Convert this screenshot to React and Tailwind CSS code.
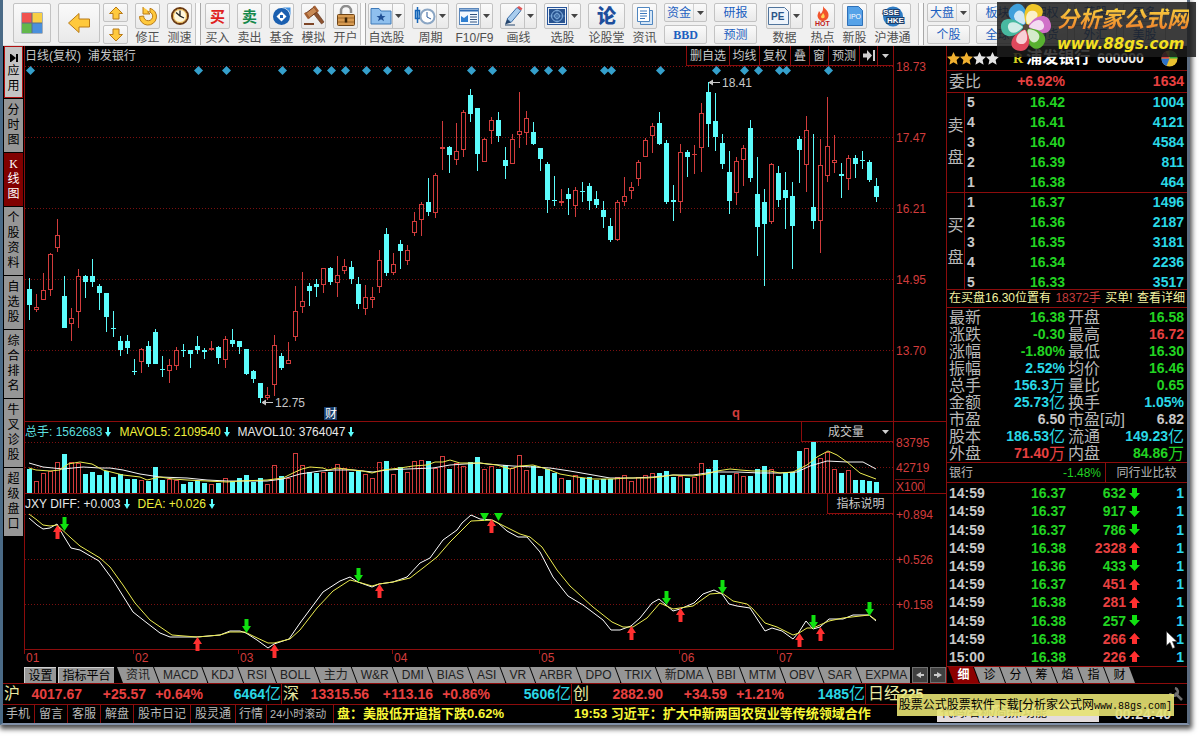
import React from 'react';

// kind (d = down, u = up, x = flat up), high, low, body top, body bottom
const CANDLES = `
d 278 320 289 305|u 294 312 307 310|u 273 300 290 300|u 253 296 254 290|u 219 252 235 248|d 276 328 296 328
u 308 341 318 324|u 269 328 276 312|d 275 298 276 282|d 259 287 276 282|d 284 310 286 293|d 293 332 293 317
d 311 337 328 329|d 336 356 341 350|d 335 354 341 348|d 359 375 371 372|u 348 373 349 362|d 341 367 346 364
d 329 364 332 364|d 356 377 369 370|u 359 383 365 371|u 347 370 350 366|d 344 357 350 351|d 350 368 350 354
d 336 354 346 350|d 348 359 350 352|x 341 351 348 350|d 346 364 347 358|u 336 368 339 360|d 329 347 340 344
d 341 354 341 347|d 349 375 349 374|d 370 383 371 379|d 383 403 383 398|u 387 400 395 398|u 335 396 345 385
d 353 370 356 368|u 342 364 360 364|u 286 341 311 337|u 272 313 301 307|d 283 306 286 291|d 279 297 284 287
u 268 293 268 285|d 267 285 268 282|u 256 297 275 283|u 259 274 266 271|d 261 284 267 279|d 277 309 284 304
u 285 315 297 309|u 287 308 297 300|u 250 293 260 287|d 228 276 234 273|u 253 275 264 273|d 240 269 244 251
u 245 265 250 261|u 212 236 221 233|u 202 236 204 220|d 178 216 202 212|u 173 218 175 213|x 121 170 147 149
d 146 173 147 155|u 123 165 151 160|u 110 157 112 150|d 89 122 95 114|d 108 171 108 154|u 138 162 139 162
u 117 144 120 131|d 112 142 120 136|d 147 179 160 166|u 134 164 139 164|u 92 148 131 135|u 111 145 118 133
d 122 145 132 144|d 148 171 148 159|d 162 213 164 200|d 176 206 200 201|x 189 206 201 203|d 188 215 194 199
u 187 217 190 206|d 182 202 191 192|d 183 210 186 201|d 191 208 199 205|d 201 228 210 217|d 218 242 226 240
u 200 241 202 240|u 177 206 196 202|u 182 199 187 191|u 160 186 162 179|u 138 157 140 157|u 123 153 126 136
d 112 145 123 144|d 140 204 143 202|d 185 221 200 202|u 144 213 152 202|d 150 177 152 157|x 145 174 154 155
u 103 172 113 148|d 82 147 92 124|d 93 151 121 137|d 134 169 143 164|d 151 214 172 201|u 157 205 161 193
u 145 186 148 160|d 120 182 128 178|d 157 256 194 227|d 189 286 202 224|u 163 224 164 222|d 166 207 173 200
d 172 229 190 198|d 182 269 196 226|d 136 183 139 150|u 116 192 130 165|d 134 229 207 221|u 139 253 165 221
u 97 182 146 176|u 135 173 160 163|d 163 198 174 176|u 155 190 158 179|d 155 178 158 164|d 151 169 160 161
d 160 182 162 180|d 178 202 186 197`
  .trim()
  .split(/[|\n]/)
  .map((row) => {
    const [kind, ...n] = row.split(' ');
    return [kind, ...n.map(Number)];
  });

const VOLUMES = [
  24, 12, 20, 22, 31, 39, 31, 30, 19, 21, 18, 22, 16, 19, 14, 14, 13, 12, 26, 13, 14, 13, 9, 11, 12,
  10, 9, 10, 15, 12, 15, 18, 11, 15, 9, 28, 17, 15, 40, 28, 21, 20, 21, 21, 29, 25, 21, 22, 19, 15,
  31, 32, 19, 26, 21, 32, 33, 32, 25, 37, 24, 30, 27, 31, 36, 24, 27, 24, 28, 25, 38, 23, 27, 17, 24,
  20, 15, 13, 18, 15, 16, 13, 14, 14, 16, 18, 12, 16, 18, 20, 20, 22, 16, 17, 15, 16, 30, 24, 33, 18,
  18, 20, 17, 17, 24, 27, 24, 17, 20, 21, 42, 45, 51, 35, 41, 24, 20, 23, 13, 13, 12, 11,
];

const DIAMONDS = [0, 24, 28, 36, 41, 43, 45, 48, 51, 54, 63, 66, 72, 74, 76, 82, 83, 90, 98, 102, 104, 107, 108, 114];

const MAVOL5 =
  '29,468 36,470 50,471 60,470 68,464 80,462 92,464 103,470 123,475 140,477 147,480 160,477 173,479 187,480 207,481 227,482 240,481 267,480 283,478 293,473 302,469 310,467 323,468 328,470 337,468 353,470 363,471 372,473 383,470 400,468 413,466 427,465 435,462 443,462 450,460 460,463 480,463 497,465 510,469 520,466 533,465 550,470 560,474 577,477 593,479 613,479 627,478 647,478 660,477 673,475 693,476 707,474 717,471 730,469 740,470 753,471 770,471 780,473 793,472 807,465 817,457 828,451 837,455 847,462 860,473 876,479';
const MAVOL10 =
  '29,463 43,467 63,469 83,467 100,468 110,468 123,470 140,474 160,477 187,478 207,480 227,481 247,481 267,481 283,479 300,474 320,471 333,470 353,470 373,472 387,470 407,469 433,468 450,465 480,463 487,464 513,466 533,467 550,468 570,471 593,475 610,478 633,478 653,477 673,475 693,475 713,472 737,472 760,473 780,473 797,472 810,466 827,461 847,462 863,462 876,469';
const DIFF =
  '29,518 37,525 43,529 50,528 57,524 63,535 71,548 80,550 99,561 113,580 133,612 147,623 160,633 170,637 197,637 220,635 230,631 240,631 246,633 257,640 268,648 274,644 289,639 300,623 323,592 340,581 350,577 358,582 372,587 379,584 393,582 407,577 420,563 430,558 443,540 457,530 462,523 471,515 480,519 492,520 498,523 507,531 518,537 527,537 540,552 553,577 568,596 583,605 603,620 611,630 620,630 631,626 640,618 652,603 659,599 666,605 673,611 680,609 694,603 703,594 714,590 722,594 729,604 737,606 750,608 765,631 772,628 782,631 793,639 799,632 806,621 813,629 820,627 829,619 843,619 853,615 869,615 876,621';
const DEA =
  '29,514 37,520 43,525 50,526 57,525 71,538 80,546 100,558 110,567 123,585 135,603 150,620 172,635 197,637 220,635 230,632 245,632 253,636 268,643 274,643 290,639 300,630 317,608 333,591 350,580 358,582 372,586 379,584 393,582 410,578 423,568 437,557 450,542 471,521 492,520 498,523 510,529 520,534 530,537 542,547 557,570 570,586 593,607 612,622 623,627 633,627 647,618 660,603 673,609 693,606 710,594 722,593 733,601 747,604 753,609 765,623 777,627 793,635 799,633 807,628 813,628 829,621 843,618 869,615 876,620';

const BUY_MARKS = [[57, 525], [197, 637], [274, 644], [379, 584], [491, 519], [631, 626], [680, 608], [799, 633], [820, 627]];
const SELL_MARKS = [[64, 531], [246, 633], [358, 582], [666, 605], [722, 594], [813, 629], [869, 616]];

const ASKS = [['5', '16.42', '1004'], ['4', '16.41', '4121'], ['3', '16.40', '4584'], ['2', '16.39', '811'], ['1', '16.38', '464']];
const BIDS = [['1', '16.37', '1496'], ['2', '16.36', '2187'], ['3', '16.35', '3181'], ['4', '16.34', '2236'], ['5', '16.33', '3517']];

const G = 'text-[#22d322]';
const R = 'text-[#e84040]';
const C = 'text-[#2ad8e6]';
const W = 'text-[#c8c8c8]';

const STATS = [
  ['最新', '16.38', '', G, '开盘', '16.58', '', G],
  ['涨跌', '-0.30', '', G, '最高', '16.72', '', R],
  ['涨幅', '-1.80%', '', G, '最低', '16.30', '', G],
  ['振幅', '2.52%', '', C, '均价', '16.46', '', G],
  ['总手', '156.3', '万', C, '量比', '0.65', '', G],
  ['金额', '25.73', '亿', C, '换手', '1.05%', '', C],
  ['市盈', '6.50', '', W, '市盈[动]', '6.82', '', W],
  ['股本', '186.53', '亿', C, '流通', '149.23', '亿', C],
  ['外盘', '71.40', '万', R, '内盘', '84.86', '万', G],
];

const TICKS = [
  ['14:59', '16.37', '632', 'down'],
  ['14:59', '16.37', '917', 'down'],
  ['14:59', '16.37', '786', 'down'],
  ['14:59', '16.38', '2328', 'up'],
  ['14:59', '16.36', '433', 'down'],
  ['14:59', '16.37', '451', 'up'],
  ['14:59', '16.38', '281', 'up'],
  ['14:59', '16.38', '257', 'down'],
  ['14:59', '16.38', '266', 'up'],
  ['15:00', '16.38', '226', 'up'],
];

const INDICATORS = ['资讯', 'MACD', 'KDJ', 'RSI', 'BOLL', '主力', 'W&R', 'DMI', 'BIAS', 'ASI', 'VR', 'ARBR', 'DPO', 'TRIX', '新DMA', 'BBI', 'MTM', 'OBV', 'SAR', 'EXPMA'];

const INDEXES = [
  { name: '沪', price: '4017.67', diff: '+25.57', pct: '+0.64%', amount: '6464', cell: 'w-[279px]', first: 'w-[78px]' },
  { name: '深', price: '13315.56', diff: '+113.16', pct: '+0.86%', amount: '5606', cell: 'w-[290px]', first: 'w-[86px]' },
  { name: '创', price: '2882.90', diff: '+34.59', pct: '+1.21%', amount: '1485', cell: 'w-[294px]', first: 'w-[90px]' },
];

const SIDE_TABS = [
  ['分时图', 'h-[54px]'],
  ['K线图', 'h-[54px]'],
  ['个股资料', 'h-[69px]'],
  ['自选股', 'h-[54px]'],
  ['综合排名', 'h-[69px]'],
  ['牛叉诊股', 'h-[69px]'],
  ['超级盘口', 'h-[69px]'],
];

/* ---------- toolbar ---------- */

const face = 'border border-[#c3c3c3] bg-linear-to-b from-[#fafafa] to-[#e9e9e9] rounded-[2px]';

function Caret({ className = 'fill-[#444]' }) {
  return (
    <svg className={`w-[7px] h-[4px] ${className}`} viewBox="0 0 7 4">
      <path d="M0 0h7L3.5 4z" />
    </svg>
  );
}

function Tool({ label, children, drop, wide }) {
  return (
    <button className={`flex flex-col items-center gap-px shrink-0 ${drop || wide ? 'w-[37px]' : 'w-[25px]'}`}>
      <span className={`flex h-[26px] w-full ${face}`}>
        <span className="flex-1 flex items-center justify-center">{children}</span>
        {drop && (
          <span className="w-[12px] flex items-center justify-center border-l border-[#c3c3c3]">
            <Caret />
          </span>
        )}
      </span>
      <span className="text-[12px] leading-[16px] text-[#505050] whitespace-nowrap">{label}</span>
    </button>
  );
}

function PairButton({ top, bottom, drop, bold }) {
  const cls = `h-[19px] flex items-center justify-center text-[12px] leading-[16px] text-[#1c5fc0] ${face}`;
  return (
    <div className="w-[43px] shrink-0 flex flex-col gap-[3px]">
      <button className={cls}>
        <span className="flex-1">{top}</span>
        {drop && (
          <span className="w-[13px] h-full border-l border-[#d0d0d0] flex items-center justify-center">
            <Caret />
          </span>
        )}
      </button>
      <button className={bold ? `${cls} font-bold font-['Liberation_Serif',serif]` : cls}>{bottom}</button>
    </div>
  );
}

function Divider() {
  return (
    <div className="w-[6px] shrink-0 h-[42px] border-l border-r border-l-[#c4c4c4] border-r-[#a8a8a8] bg-[#fafafa]" />
  );
}

const GOLD = { fill: '#ffc93c', stroke: '#b97b18', strokeWidth: 1 };

function Toolbar() {
  return (
    <header className="h-[46px] bg-[#f0f0f0] border-b border-[#d8d8d8] flex items-start pt-[3px] pl-[5px] overflow-hidden">
      <div className="flex gap-[7px] pl-[5px]">
        <button aria-label="首页" className={`w-[38px] h-[40px] flex items-center justify-center ${face}`}>
          <svg width="22" height="22" viewBox="0 0 22 22">
            <rect x=".5" y=".5" width="21" height="21" fill="#5a6f86" />
            <rect x="1" y="1" width="9.500" height="9.500" fill="#f0534f" />
            <rect x="11.500" y="1" width="9.500" height="9.500" fill="#f8cf45" />
            <rect x="1" y="11.500" width="9.500" height="9.500" fill="#63b84c" />
            <rect x="11.500" y="11.500" width="9.500" height="9.500" fill="#4a90dc" />
          </svg>
        </button>
        <button aria-label="后退" className={`w-[42px] h-[40px] flex items-center justify-center ${face}`}>
          <svg width="24" height="22" viewBox="0 0 24 22">
            <path d="M1.500 11L12 1.500V7h10.500v8H12v5.500z" {...GOLD} />
          </svg>
        </button>
        <div className="w-[25px] -ml-[4px] flex flex-col gap-[3px]">
          <button aria-label="上一个" className={`h-[19px] flex items-center justify-center ${face}`}>
            <svg width="16" height="14" viewBox="0 0 16 14">
              <path d="M8 1L14.500 7.500H11V13H5V7.500H1.500z" {...GOLD} />
            </svg>
          </button>
          <button aria-label="下一个" className={`h-[19px] flex items-center justify-center ${face}`}>
            <svg width="16" height="14" viewBox="0 0 16 14">
              <path d="M8 13L14.500 6.500H11V1H5v5.500H1.500z" {...GOLD} />
            </svg>
          </button>
        </div>
        <Tool label="修正">
          <svg width="20" height="20" viewBox="0 0 20 20">
            <path d="M5 1v7h7L9.500 5.800A4.500 4.500 0 1 1 5.700 10L1.500 10.500A8.500 8.500 0 1 0 12 2.300V6" {...GOLD} />
          </svg>
        </Tool>
        <Tool label="测速">
          <svg width="20" height="20" viewBox="0 0 20 20">
            <circle cx="10" cy="10" r="8" fill="#fff8dd" stroke="#6b3b14" strokeWidth="2" />
            <circle cx="10" cy="10" r="6.500" fill="none" stroke="#e8b040" />
            <path d="M10 4.500V10l4 2M10 10L6 6.500" stroke="#222" strokeWidth="1.300" fill="none" />
          </svg>
        </Tool>
        <div className="-ml-[4px] -mr-[3px]">
          <Divider />
        </div>
        <Tool label="买入">
          <span className="text-[15px] font-bold leading-none text-[#e02020]">买</span>
        </Tool>
        <Tool label="卖出">
          <span className="text-[15px] font-bold leading-none text-[#15884a]">卖</span>
        </Tool>
        <Tool label="基金">
          <svg width="20" height="20" viewBox="0 0 20 20">
            <circle cx="9.500" cy="10.500" r="8.500" fill="#1a5fb0" />
            <path d="M10 1.500h8.500v9A8.500 8.500 0 0 0 10 1.500z" fill="#3f8fe0" />
            <path d="M9.500 5.500l5 5-5 5-5-5z" fill="#fff" />
            <rect x="8" y="9" width="3" height="3" fill="#1a5fb0" />
          </svg>
        </Tool>
        <Tool label="模拟">
          <svg width="22" height="22" viewBox="0 0 22 22">
            <path d="M10 8l3-2 8 11-2.500 2z" fill="#8c5230" stroke="#5b2d14" strokeWidth=".6" />
            <path d="M2.500 8.500L11 2l3.500 4.500L6 13z" fill="#c98a55" stroke="#6b3517" />
            <path d="M1 8.500l2-1.500 4 6-2 1.200zM10 1.500L12 .5l4 5.500-2 1.500z" fill="#a35f33" />
            <path d="M1 18h10v2H1z" fill="#7d4526" />
          </svg>
        </Tool>
        <Tool label="开户">
          <svg width="20" height="22" viewBox="0 0 20 22">
            <path d="M5 10V6a5 5 0 0 1 10 0v2" fill="none" stroke="#8d8d8d" strokeWidth="2.500" />
            <rect x="1.500" y="9.500" width="17" height="11" rx="1" fill="#d79b52" stroke="#704516" />
            <path d="M2 13h16M2 17h16" stroke="#9b6526" />
            <path d="M10 12.500v5" stroke="#3b2408" strokeWidth="2.500" />
          </svg>
        </Tool>
        <div className="-ml-[5px]">
          <Divider />
        </div>
      </div>

      <div className="flex gap-[7px] pl-[2px]">
        <Tool label="自选股" drop>
          <svg width="22" height="18" viewBox="0 0 22 18">
            <path d="M1 3V1.500h8L11 4h10v13H1z" fill="#8fc0ee" stroke="#3f7ab8" />
            <path d="M11 6l1.300 3h3.200l-2.500 2 1 3.200-3-1.900-3 1.900 1-3.200-2.500-2h3.200z" fill="#1f4f94" />
          </svg>
        </Tool>
        <Tool label="周期" drop>
          <svg width="22" height="20" viewBox="0 0 22 20">
            <path d="M3.500 1v16M1.500 4.500h4v8h-4z" stroke="#1565b8" strokeWidth="1.500" fill="#bfe0fa" />
            <circle cx="13.500" cy="10.500" r="7" fill="#fff" stroke="#8ba6c4" strokeWidth="2" />
            <path d="M13 6v5l4 2" stroke="#2c5c9c" fill="none" />
          </svg>
        </Tool>
        <Tool label="F10/F9" drop>
          <svg width="20" height="17" viewBox="0 0 20 17">
            <rect x=".5" y=".5" width="19" height="16" fill="#f2f8fe" stroke="#5b87bb" />
            <path d="M1 2.500h18" stroke="#2f6cb5" strokeWidth="2" />
            <path d="M2 8l3 2 4-3v7H2z" fill="#2f7fd0" />
            <path d="M11 6.500h7M11 9h7M11 11.500h7M11 14h7" stroke="#30507c" />
          </svg>
        </Tool>
        <Tool label="画线" drop>
          <svg width="20" height="20" viewBox="0 0 20 20">
            <path d="M4 13L14 1.500l4 3L8 16.500z" fill="#a9cdee" stroke="#3d6fa8" />
            <path d="M14 1.500L16 0l3.500 2.500L18 4.500z" fill="#e05656" />
            <path d="M4 13l4 3.500L2 18.500z" fill="#25466f" />
            <path d="M2 19h10" stroke="#25466f" />
          </svg>
        </Tool>
        <Tool label="选股" drop>
          <svg width="20" height="18" viewBox="0 0 20 18">
            <rect x=".5" y=".5" width="19" height="17" fill="#e6eef7" stroke="#28559a" />
            <rect x="2" y="2" width="16" height="14" fill="#27528f" />
            <circle cx="10" cy="9" r="5.500" fill="none" stroke="#8fbbe8" />
            <circle cx="10" cy="9" r="2.500" fill="none" stroke="#8fbbe8" />
            <path d="M2 9h16M10 2v14" stroke="#6695cc" strokeWidth=".7" />
          </svg>
        </Tool>
        <Tool label="论股堂" wide>
          <span className="text-[19px] font-black leading-none text-[#1d4e9c]">论</span>
        </Tool>
        <Tool label="资讯">
          <svg width="18" height="20" viewBox="0 0 18 20">
            <path d="M4.500 4.500h12v14h-12z" fill="#d5e6f7" stroke="#4f86c0" />
            <path d="M1.500 1.500h12v14h-12z" fill="#fff" stroke="#4f86c0" />
            <path d="M4 5h7M4 7.500h7M4 10h7M4 12.500h5" stroke="#3c78bc" />
          </svg>
        </Tool>
        <PairButton top="资金" bottom="BBD" drop bold />
        <PairButton top="研报" bottom="预测" />
      </div>

      <div className="flex gap-[7px] pl-[9px]">
        <Tool label="数据" drop>
          <svg width="21" height="18" viewBox="0 0 21 18">
            <path d="M.5 .5h16l4 4v13h-20z" fill="#eef4fb" stroke="#50749c" />
            <text x="3" y="13" fontSize="10" fontWeight="bold" fill="#2b5488" fontFamily="Liberation Sans">PE</text>
          </svg>
        </Tool>
        <Tool label="热点">
          <svg width="20" height="21" viewBox="0 0 20 21">
            <path d="M10 0c1 3 5.500 4 5.500 9a5.500 5.500 0 0 1-11 1c0-2 1-3 1.500-5 1 1 1.500 2 1.500 3C9.500 6 10.500 4 10 0z" fill="#f2542c" />
            <path d="M10 7c1.500 2 2 3 1.500 4.500a2 2 0 0 1-3.500-.5C8 9.500 9.500 9 10 7z" fill="#ffd257" />
            <text x="2" y="20" fontSize="7" fontWeight="bold" fill="#c02020" fontFamily="Liberation Sans">HOT</text>
          </svg>
        </Tool>
        <Tool label="新股">
          <svg width="16" height="20" viewBox="0 0 16 20">
            <path d="M.5 .5h11l4 4v15H.5z" fill="#56a2e8" stroke="#2d70b8" />
            <text x="2" y="13" fontSize="7" fill="#fff" fontFamily="Liberation Sans">IPO</text>
          </svg>
        </Tool>
        <Tool label="沪港通" wide>
          <svg width="30" height="21" viewBox="0 0 30 21">
            <circle cx="15" cy="10.500" r="10" fill="#2f7cc4" />
            <text x="5" y="9" fontSize="8" fontWeight="bold" fill="#fff" stroke="#1c3e6b" strokeWidth="2" paintOrder="stroke" fontFamily="Liberation Sans">SSE</text>
            <text x="9" y="17" fontSize="8" fontWeight="bold" fill="#fff" stroke="#1c3e6b" strokeWidth="2" paintOrder="stroke" fontFamily="Liberation Sans">HKE</text>
          </svg>
        </Tool>
        <Divider />
      </div>

      <div className="flex gap-[6px] pl-[3px]">
        <PairButton top="大盘" bottom="个股" drop />
        <PairButton top="板块" bottom="全球" />
        <PairButton top="期权" bottom="期货" />
        <PairButton top="英股" bottom="外汇" />
        <PairButton top="更多" bottom="美股" />
      </div>
    </header>
  );
}

/* ---------- left tabs ---------- */

function SideTabs() {
  return (
    <nav className="w-[21px] shrink-0 bg-black pl-px pr-px">
      <button className="w-full h-[52px] flex flex-col items-center pt-[7px] bg-[#c4c4c4] text-black border border-[#b01010]">
        <svg className="w-[8px] h-[8px] mb-[2px]" viewBox="0 0 8 8">
          <path d="M0 0v8M7 0v8" stroke="#000" strokeWidth="2" />
          <path d="M1 0l5 4-5 4z" />
        </svg>
        <span className="w-[12px] text-[12px] leading-[15px] break-all">应用</span>
      </button>
      {SIDE_TABS.map(([label, height]) => (
        <button
          key={label}
          className={`w-full ${height} flex items-center justify-center border-t border-black ${
            label === 'K线图' ? 'bg-[#800000] text-white' : 'bg-[#969696] text-black'
          }`}
        >
          <span className="w-[12px] text-[12px] leading-[15px] break-all first-letter:font-['Liberation_Serif','Noto_Sans_CJK_SC',serif]">
            {label}
          </span>
        </button>
      ))}
    </nav>
  );
}

/* ---------- charts ---------- */

const RED = '#d23c3c';
const CYAN = '#5cfcfc';

function Grid({ ys }) {
  return ys.map((y) => (
    <line key={y} x1="0" x2="100%" y1={y} y2={y} stroke="#7a1010" strokeDasharray="1 2" />
  ));
}

function AxisText({ items }) {
  return items.map(([y, text]) => (
    <text key={text} x="2" y={y} fontSize="12" fill={RED}>
      {text}
    </text>
  ));
}

function DownMark() {
  return (
    <svg className="w-[6px] h-[10px] ml-[3px] mr-[8px] fill-[#5cfcfc]" viewBox="0 0 6 10">
      <path d="M2 0h2v5h2L3 10 0 5h2z" />
    </svg>
  );
}

function PricePanel() {
  const tools = [
    ['删自选', 'w-[43px]'],
    ['均线', 'w-[30px]'],
    ['复权', 'w-[31px]'],
    ['叠', 'w-[19px]'],
    ['窗', 'w-[19px]'],
    ['预测', 'w-[31px]'],
  ];
  return (
    <section className="flex border-b border-[#8c0c0c]">
      <div className="flex-1 min-w-0 border-r border-[#8c0c0c]">
        <div className="h-[20px] flex justify-between text-[12px] leading-[20px] text-[#c8c8c8]">
          <h1>日线(复权)&nbsp; 浦发银行</h1>
          <div className="flex h-[20px] border-b border-[#8c0c0c]">
            {tools.map(([label, width]) => (
              <button key={label} className={`${width} border-l border-[#8c0c0c]`}>
                {label}
              </button>
            ))}
            <button aria-label="最后" className="w-[18px] border-l border-[#8c0c0c] flex items-center justify-center">
              <svg width="12" height="11" viewBox="0 0 12 11" fill="#d0d0d0">
                <path d="M0 3.500h4V0l5 5.500L4 11V7.500H0zM10 0h2v11h-2z" />
              </svg>
            </button>
            <button aria-label="更多" className="w-[16px] border-l border-[#8c0c0c] flex items-center justify-center">
              <Caret className="fill-[#d0d0d0]" />
            </button>
          </div>
        </div>
        <svg className="block w-full h-[355px]" shapeRendering="crispEdges">
          <Grid ys={[0.5, 71.5, 142.5, 213.5, 284.5]} />
          <g transform="translate(-25 -66)">
            {CANDLES.map(([kind, high, low, top, bottom], i) => {
              const x = 27 + 7 * i;
              const color = kind === 'd' ? CYAN : RED;
              return (
                <g key={i}>
                  <path d={`M${x + 2.5} ${high}V${top}M${x + 2.5} ${bottom}V${low}`} stroke={color} />
                  {kind === 'u' ? (
                    <rect x={x + 0.5} y={top + 0.5} width="4" height={Math.max(bottom - top - 1, 1)} fill="none" stroke={color} />
                  ) : (
                    <rect x={x} y={top} width="5" height={bottom - top} fill={color} />
                  )}
                </g>
              );
            })}
            <g fill="#35a0cc" shapeRendering="auto">
              {DIAMONDS.map((i) => (
                <path key={i} d={`M${30.5 + 7 * i} 66l4.500 4.500-4.500 4.500-4.500-4.500z`} />
              ))}
            </g>
            <g fill="#c8c8c8" stroke="#c8c8c8" shapeRendering="auto">
              <path d="M709 82.500h11M713 80l-4 2.500 4 2.500M262 402.500h11M266 400l-4 2.500 4 2.500" />
              <text x="722" y="87" fontSize="12" stroke="none">18.41</text>
              <text x="275" y="407" fontSize="12" stroke="none">12.75</text>
            </g>
            <rect x="324" y="407" width="13" height="13" fill="#173c6b" />
            <text x="325" y="418" fontSize="12" fill="#fff">财</text>
            <text x="732" y="417" fontSize="13" fontWeight="bold" fill={RED}>q</text>
          </g>
        </svg>
      </div>
      <svg className="w-[52px] h-[375px] shrink-0">
        <AxisText items={[[25, '18.73'], [96, '17.47'], [167, '16.21'], [238, '14.95'], [309, '13.70']]} />
      </svg>
    </section>
  );
}

function VolumePanel() {
  return (
    <section className="flex border-b border-[#8c0c0c]">
      <div className="flex-1 min-w-0 border-r border-[#8c0c0c]">
        <div className="h-[20px] flex items-center text-[12px] whitespace-nowrap">
          <span className="text-[#5cdede]">总手: 1562683</span>
          <DownMark />
          <span className="text-[#f0f03c]">MAVOL5: 2109540</span>
          <DownMark />
          <span className="text-[#e8e8e8]">MAVOL10: 3764047</span>
          <DownMark />
          <button className="ml-auto w-[92px] h-[20px] pl-[26px] pr-[4px] flex items-center justify-between border-l border-b border-[#8c0c0c] text-[#c8c8c8]">
            成交量
            <Caret className="fill-[#d0d0d0]" />
          </button>
        </div>
        <svg className="block w-full h-[51px]">
          <Grid ys={[0.5, 25.5]} />
          <g transform="translate(-25 -442)">
            {VOLUMES.map((v, i) =>
              CANDLES[i][0] === 'd' ? (
                <rect key={i} x={27 + 7 * i} y={493 - v} width="5" height={v} fill={CYAN} />
              ) : (
                <rect key={i} x={27.5 + 7 * i} y={493.5 - v} width="4" height={v} fill="none" stroke={RED} />
              )
            )}
            <polyline points={MAVOL10} fill="none" stroke="#f4f4f4" />
            <polyline points={MAVOL5} fill="none" stroke="#ecec50" />
          </g>
        </svg>
      </div>
      <svg className="w-[52px] h-[71px] shrink-0">
        <AxisText items={[[25, '83795'], [50, '42719'], [69, 'X100']]} />
        <path d="M1 57.500h29.500V71" fill="none" stroke="#6a1010" />
      </svg>
    </section>
  );
}

function JxyPanel() {
  return (
    <section className="flex">
      <div className="flex-1 min-w-0 border-r border-b border-[#8c0c0c]">
        <div className="h-[20px] flex items-center text-[12px] whitespace-nowrap">
          <span className="text-[#e8e8e8]">JXY DIFF: +0.003</span>
          <DownMark />
          <span className="text-[#f0f03c]">DEA: +0.026</span>
          <DownMark />
          <button className="ml-auto w-[66px] h-[20px] border-l border-b border-[#8c0c0c] text-[#c8c8c8]">指标说明</button>
        </div>
        <svg className="block w-full h-[135px] overflow-visible">
          <Grid ys={[0.5, 45.5, 90.5]} />
          <g transform="translate(-25 -514)">
            <polyline points={DIFF} fill="none" stroke="#fff" />
            <polyline points={DEA} fill="none" stroke="#ecec50" />
            {BUY_MARKS.map(([x, y]) => (
              <path key={x} d={`M${x + 0.5} ${y}l4.500 7h-2.500v7h-4v-7h-2.500z`} fill="#ff3030" />
            ))}
            {SELL_MARKS.map(([x, y]) => (
              <path key={x} d={`M${x + 0.5} ${y}l4.500-7h-2.500v-7h-4v7h-2.500z`} fill="#10e010" />
            ))}
            <path d="M480 513h9l-4.500 8zM494 513h9l-4.500 8z" fill="#10e010" />
          </g>
        </svg>
      </div>
      <svg className="w-[52px] h-[156px] shrink-0">
        <AxisText items={[[25, '+0.894'], [70, '+0.526'], [115, '+0.158']]} />
      </svg>
    </section>
  );
}

function DateAxis() {
  const dates = [[2, '01'], [111, '02'], [216, '03'], [370, '04'], [517, '05'], [657, '06'], [755, '07']];
  return (
    <svg className="block w-full h-[17px]">
      {dates.map(([x, text]) => (
        <g key={text}>
          <path d={`M${x - 1.5} 0v4`} stroke="#8c0c0c" />
          <text x={x} y="12" fontSize="12" fill={RED}>
            {text}
          </text>
        </g>
      ))}
    </svg>
  );
}

const slanted = 'h-[16px] shrink-0 [clip-path:polygon(0_0,calc(100%-6px)_0,100%_100%,6px_100%)]';

function IndicatorTabs() {
  return (
    <div className="h-[16px] flex text-[12px] leading-[16px] text-black">
      <button className="w-[32px] shrink-0 bg-[#969696] border-t border-l border-[#d0d0d0] leading-[14px]">设置</button>
      <button className="w-[56px] shrink-0 ml-[2px] bg-[#969696] border-t border-l border-[#d0d0d0] leading-[14px]">指标平台</button>
      <div className="flex-1 min-w-0 ml-[3px] flex overflow-hidden">
        {INDICATORS.map((name, i) => (
          <button key={name} className={`${slanted} px-[9px] bg-[#969696] text-[#202020] ${i ? '-ml-[5px]' : ''}`}>
            {name}
          </button>
        ))}
      </div>
      <button aria-label="左移" className="w-[16px] shrink-0 ml-[2px] flex items-center justify-center bg-[#404040] border border-[#707070]">
        <svg width="8" height="6" viewBox="0 0 8 6" fill="#c8c8c8"><path d="M8 2H5V0L0 3l5 3V4h3z" /></svg>
      </button>
      <button aria-label="右移" className="w-[16px] shrink-0 ml-[2px] flex items-center justify-center bg-[#404040] border border-[#707070]">
        <svg width="8" height="6" viewBox="0 0 8 6" fill="#c8c8c8"><path d="M0 2h3V0l5 3-5 3V4H0z" /></svg>
      </button>
    </div>
  );
}

/* ---------- quote panel ---------- */

function Depth({ title, rows, height }) {
  return (
    <div className={`${height} flex border-t border-[#8c0c0c]`}>
      <div className="w-[18px] shrink-0 flex flex-col items-center pt-[25px] gap-[16px] border-r border-[#8c0c0c] text-[16px] leading-[16px] text-[#b8b8b8]">
        {title.map((c) => (
          <span key={c}>{c}</span>
        ))}
      </div>
      <table className="flex-1 block text-[14px] leading-[18px] font-bold">
        <tbody className="block">
          {rows.map(([level, price, volume]) => (
            <tr key={level} className="flex h-[20px] pl-[2px] pr-[3px]">
              <td className="w-[20px] text-[#c8c8c8]">{level}</td>
              <td className={`w-[78px] text-right ${G}`}>{price}</td>
              <td className={`flex-1 text-right ${C}`}>{volume}</td>
            </tr>
          ))}
        </tbody>
      </table>
    </div>
  );
}

function Stat({ label, value, unit, color, className }) {
  return (
    <div className={`flex justify-between ${className}`}>
      <dt className="text-[#b8b8b8]">{label}</dt>
      <dd className={`${color} flex`}>
        <b className="text-[14px]">{value}</b>
        {unit}
      </dd>
    </div>
  );
}

function Star({ fill }) {
  return (
    <svg width="13" height="13" viewBox="0 0 13 13" fill={fill}>
      <path d="M6.500 0l2 4.300 4.500.5-3.400 3.100 1 4.800-4.100-2.500-4.100 2.500 1-4.800L0 4.800l4.500-.5z" />
    </svg>
  );
}

function QuotePanel() {
  return (
    <aside className="w-[241px] shrink-0 flex flex-col border-l border-[#8c0c0c]">
      <div className="h-[24px] flex items-center pr-[9px]">
        <Star fill="#f0b030" />
        <Star fill="#f0b030" />
        <Star fill="#e4e4e4" />
        <Star fill="#e4e4e4" />
        <b className="ml-[14px] text-[14px] text-[#d8d020] font-['Liberation_Serif',serif]">R</b>
        <h2 className="ml-[3px] text-[16px] font-bold text-white">浦发银行</h2>
        <b className="ml-[7px] text-[14px] text-[#e8e8e8]">600000</b>
        <svg className="ml-auto" width="17" height="17" viewBox="0 0 17 17">
          <circle cx="8.500" cy="8.500" r="8" fill="#e8c030" />
          <path d="M8.500 8.500V.5a8 8 0 0 1 8 8z" fill="#38a838" />
          <path d="M8.500 8.500l-8 0a8 8 0 0 0 5 7.500z" fill="#2b70c8" />
          <path d="M8.500 8.500l-8 0a8 8 0 0 1 4-7z" fill="#d04040" />
        </svg>
      </div>
      <div className="h-[22px] flex items-center border-t border-[#8c0c0c] pl-[2px] pr-[3px] text-[14px] font-bold">
        <span className="text-[16px] font-normal text-[#b8b8b8]">委比</span>
        <span className={`w-[84px] text-right ${R}`}>+6.92%</span>
        <span className={`ml-auto ${R}`}>1634</span>
      </div>
      <Depth title={['卖', '盘']} rows={ASKS} height="h-[100px]" />
      <Depth title={['买', '盘']} rows={BIDS} height="h-[97px]" />
      <a href="#detail" className="h-[18px] flex items-center justify-between px-[2px] border-t border-[#8c0c0c] text-[12px] leading-[17px] text-[#f4f4a0] whitespace-nowrap">
        <span>在买盘16.30位置有</span>
        <span className="text-[#c83c3c]">18372手</span>
        <span>买单!</span>
        <span>查看详细</span>
      </a>
      <dl className="h-[155px] pt-px border-t border-[#8c0c0c] text-[16px] leading-[17px]">
        {STATS.map(([a, av, au, ac, b, bv, bu, bc]) => (
          <div key={a} className="flex h-[17px] pl-[2px] pr-[3px]">
            <Stat label={a} value={av} unit={au} color={ac} className="w-[116px]" />
            <Stat label={b} value={bv} unit={bu} color={bc} className="flex-1 ml-[3px]" />
          </div>
        ))}
      </dl>
      <div className="h-[20px] flex border-t border-[#8c0c0c] text-[12px] leading-[20px] text-[#b8b8b8]">
        <span className="pl-[2px]">银行</span>
        <span className={`ml-auto pr-[4px] ${G}`}>-1.48%</span>
        <button className="w-[82px] border-l border-[#8c0c0c]">同行业比较</button>
      </div>
      <table className="h-[185px] block border-t border-b border-[#8c0c0c] pt-px text-[14px] leading-[18px] font-bold">
        <tbody className="h-full flex flex-col">
          {TICKS.map(([time, price, volume, dir], i) => (
            <tr key={i} className="flex-1 flex items-center pl-[2px] pr-[3px]">
              <td className="w-[36px] text-[#c8c8c8]">{time}</td>
              <td className={`w-[81px] text-right ${G}`}>{price}</td>
              <td className={`w-[60px] text-right ${dir === 'up' ? R : G}`}>{volume}</td>
              <td className="pl-[3px]">
                <svg className={dir === 'up' ? 'fill-[#ff3030]' : 'fill-[#10e010] rotate-180'} width="11" height="11" viewBox="0 0 11 11">
                  <path d="M5.500 0L11 6H8v5H3V6H0z" />
                </svg>
              </td>
              <td className="flex-1 text-right text-[#2ad8f0]">1</td>
            </tr>
          ))}
        </tbody>
      </table>
      <div className="h-[16px] flex pl-px text-[12px] leading-[16px]">
        {['细', '诊', '分', '筹', '焰', '指', '财'].map((name, i) => (
          <button
            key={name}
            className={`${slanted} w-[31px] ${i ? '-ml-[5px] bg-[#969696] text-black' : 'bg-[#8c0000] text-white font-bold'}`}
          >
            {name}
          </button>
        ))}
      </div>
    </aside>
  );
}

/* ---------- footer ---------- */

function IndexBar() {
  return (
    <div className="h-[21px] flex border-t border-[#8c0c0c] text-[14px] leading-[20px] font-bold whitespace-nowrap overflow-hidden">
      {INDEXES.map((it) => (
        <div key={it.name} className={`${it.cell} shrink-0 flex pl-px border-r border-[#8c0c0c]`}>
          <div className={`${it.first} flex justify-between`}>
            <span className="text-[16px] font-normal text-[#e8e8a0]">{it.name}</span>
            <span className={R}>{it.price}</span>
          </div>
          <span className={`w-[64px] text-right ${R}`}>{it.diff}</span>
          <span className={`w-[57px] text-right ${R}`}>{it.pct}</span>
          <span className={`flex-1 flex justify-end ${C}`}>
            {it.amount}
            <span className="text-[16px] font-normal">亿</span>
          </span>
        </div>
      ))}
      <div className="flex-1 flex items-center pl-[2px] pr-[4px] text-[#e8e8a0]">
        <span className="text-[16px] font-normal">日经</span>225
        <svg className="ml-auto" width="14" height="14" viewBox="0 0 14 14" fill="none" stroke="#707070" strokeWidth="2.500">
          <path d="M13 13L6 6M6 1a4 4 0 1 1-5 5" />
        </svg>
      </div>
    </div>
  );
}

function BottomBar() {
  const links = ['手机', '留言', '客服', '解盘', '股市日记', '股灵通', '行情'];
  return (
    <div className="h-[19px] flex border-t border-[#8c0c0c] text-[12px] leading-[18px] text-[#b8b8b8] whitespace-nowrap overflow-hidden">
      {links.map((link) => (
        <a key={link} href="#link" className="px-[4px] shrink-0 border-r border-[#8c0c0c] first:pl-[3px] nth-[n+7]:px-[3px]">
          {link}
        </a>
      ))}
      <a href="#news" className="px-[3px] w-[67px] shrink-0 border-r border-[#8c0c0c] text-[11px]">24小时滚动</a>
      <div className="flex-1 min-w-0 flex gap-[70px] overflow-hidden pl-[3px] text-[13px] font-bold text-[#f8f838]">
        <span>盘：美股低开道指下跌0.62%</span>
        <span>19:53 习近平：扩大中新两国农贸业等传统领域合作</span>
      </div>
      <input
        aria-label="搜索"
        className="w-[162px] shrink-0 h-[17px] bg-[#e4dcdc] px-[4px] text-[12px] leading-[17px] text-black placeholder:text-black"
        placeholder="代码/名称/简拼/功能"
      />
      <time className="w-[88px] shrink-0 text-center text-[14px] font-bold text-[#d8d8d8]">00:24:40</time>
    </div>
  );
}

/* ---------- floating things ---------- */

function SiteLogo() {
  const petals = [
    ['#3fa0dc', -32],
    ['#f0c628', 28],
    ['#d070c8', 82],
    ['#58b030', 140],
    ['#e0485c', 200],
    ['#48b8a0', 268],
  ];
  return (
    <div className="absolute right-[3px] top-[2px] w-[199px] h-[55px] bg-[#1c1c1c]/85 flex items-start">
      <svg className="w-[56px] h-[54px] shrink-0 ml-px overflow-visible" viewBox="0 0 56 54">
        {petals.map(([color, angle]) => (
          <g key={color} transform={`rotate(${angle} 28 25)`}>
            <path d="M28 23C17 15 16 1 28 0s11 15 0 23z" fill={color} />
            <path d="M28 22c-7-6-7-14 0-15s7 9 0 15z" fill="#fff" opacity=".75" />
          </g>
        ))}
        <circle cx="28" cy="25" r="3" fill="#5a4a3c" />
      </svg>
      <div className="pt-[4px] pl-[3px] whitespace-nowrap italic font-bold">
        <div className="text-[22px] leading-[28px] bg-linear-to-b from-[#f8d840] to-[#e86c28] bg-clip-text text-transparent">分析家公式网</div>
        <div className="text-[15px] leading-[20px] text-[#f4e020] font-['DejaVu_Sans',sans-serif]">www.88gs.com</div>
      </div>
    </div>
  );
}

export default function App() {
  return (
    <div className="relative bg-white pb-[12px] overflow-hidden font-['Liberation_Sans','Noto_Sans_CJK_SC',sans-serif]">
      <div className="mr-[9px] border-l-[3px] border-r-[3px] border-b-2 border-l-[#4a6a86] border-r-[#5c6c80] border-b-[#8090a8] bg-black shadow-[1px_3px_5px_1px_rgba(0,0,0,0.7)]">
        <Toolbar />
        <div className="flex">
          <SideTabs />
          <div className="flex-1 min-w-0 flex">
            <main className="flex-1 min-w-0">
              <div className="border-l border-[#8c0c0c]">
                <PricePanel />
                <VolumePanel />
                <JxyPanel />
              </div>
              <DateAxis />
              <IndicatorTabs />
            </main>
            <QuotePanel />
          </div>
        </div>
        <IndexBar />
        <BottomBar />
      </div>

      <SiteLogo />
      <div className="absolute right-[25px] top-[694px] h-[22px] px-[2px] bg-[#e6e272]/90 text-[12px] leading-[22px] text-black whitespace-nowrap">
        股票公式股票软件下载[分析家公式网
        <span className="text-[10px] font-['Liberation_Mono',monospace]">www.88gs.com]</span>
      </div>
      <svg className="absolute right-[21px] top-[631px]" width="12" height="19" viewBox="0 0 12 19">
        <path d="M.5 .5v14l3.500-3 2.500 6 2.500-1-2.500-6H11z" fill="#fff" stroke="#333" strokeWidth=".6" />
      </svg>
    </div>
  );
}
